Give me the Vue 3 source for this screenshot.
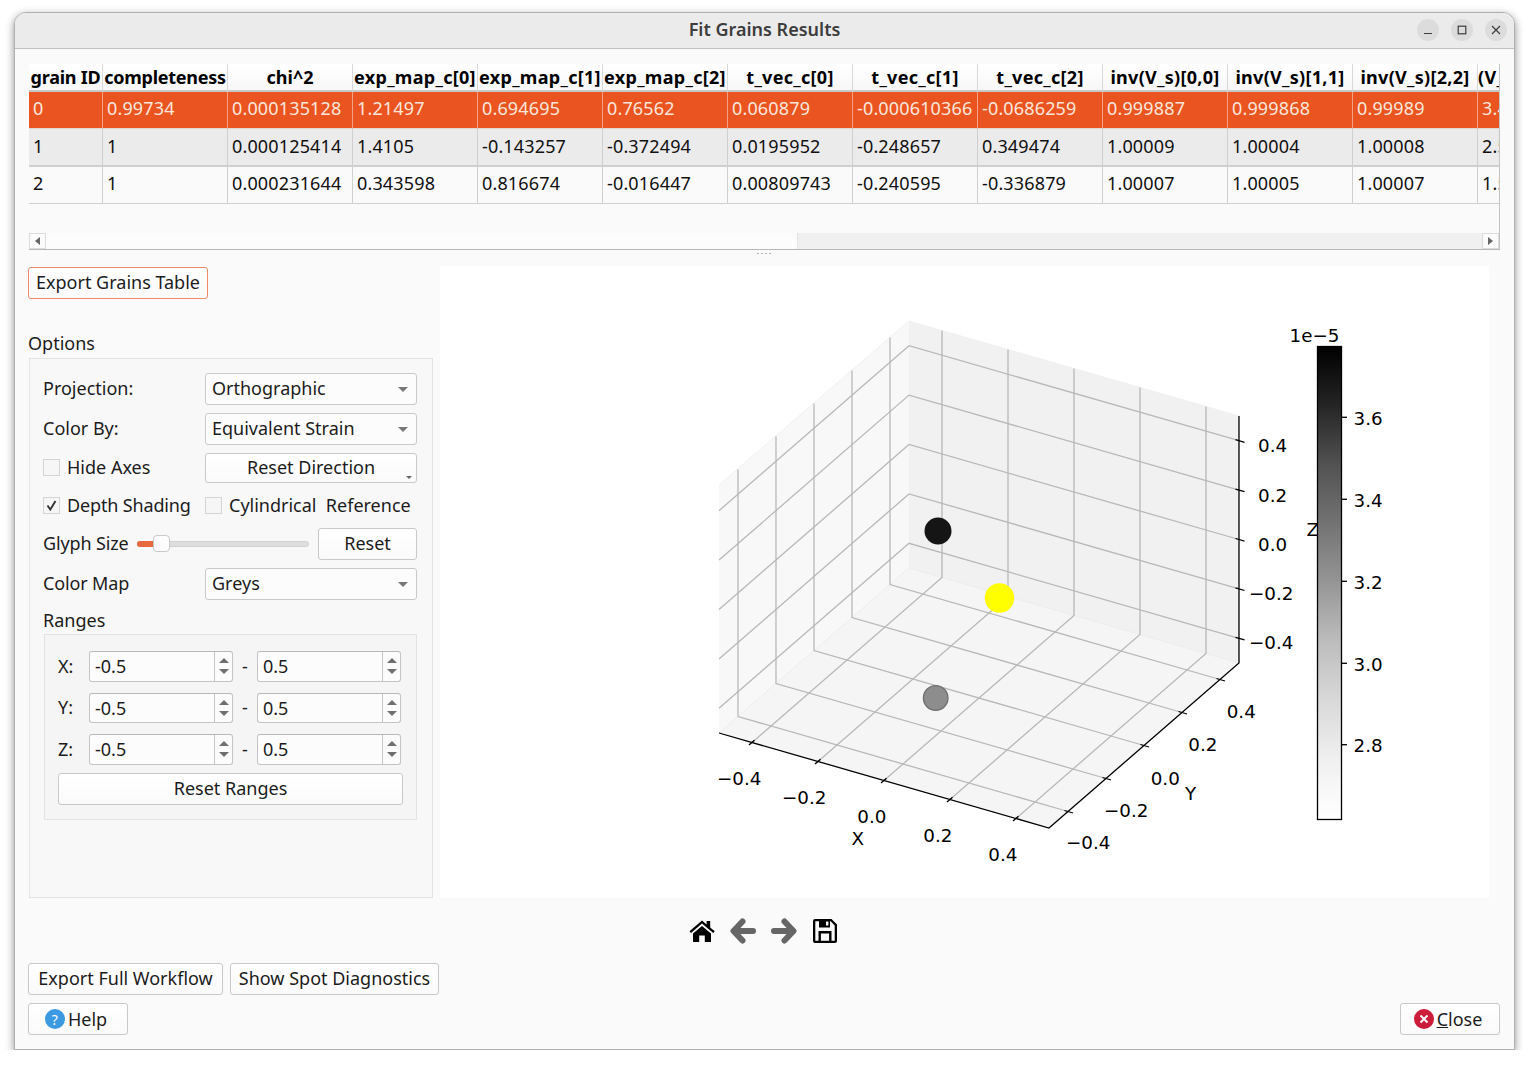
<script setup>
const headers = ['grain ID', 'completeness', 'chi^2', 'exp_map_c[0]', 'exp_map_c[1]', 'exp_map_c[2]', 't_vec_c[0]', 't_vec_c[1]', 't_vec_c[2]', 'inv(V_s)[0,0]', 'inv(V_s)[1,1]', 'inv(V_s)[2,2]', '(V_s)[1,2]']
const rows = [
  ['0', '0.99734', '0.000135128', '1.21497', '0.694695', '0.76562', '0.060879', '-0.000610366', '-0.0686259', '0.999887', '0.999868', '0.99989', '3.4'],
  ['1', '1', '0.000125414', '1.4105', '-0.143257', '-0.372494', '0.0195952', '-0.248657', '0.349474', '1.00009', '1.00004', '1.00008', '2.5'],
  ['2', '1', '0.000231644', '0.343598', '0.816674', '-0.016447', '0.00809743', '-0.240595', '-0.336879', '1.00007', '1.00005', '1.00007', '1.5']
]
const ranges = ['X:', 'Y:', 'Z:']

// axes box corners, in screen px
const ticks = [0.1, 0.3, 0.5, 0.7, 0.9]
const H = 247
const lines = []
for (const t of ticks) {
  // x gridlines: along the y axis on the floor then up the back wall
  const fx = 909 + 330 * t
  const fy = 568 + 95 * t
  lines.push(`${fx - 190},${fy + 165} ${fx},${fy} ${fx},${fy - H}`)
  // y gridlines: along the x axis on the floor then up the left wall
  const gx = 909 - 190 * t
  const gy = 568 + 165 * t
  lines.push(`${gx + 330},${gy + 95} ${gx},${gy} ${gx},${gy - H}`)
  // z gridlines round the two walls
  const zy = 568 - H * t
  lines.push(`719,${zy + 165} 909,${zy} 1239,${zy + 95}`)
}
const tickMarks = []
for (const t of ticks) {
  const x = 719 + 330 * t
  const y = 733 + 95 * t
  tickMarks.push([x - 3, y + 2.6, x + 2.5, y - 2.2])
  tickMarks.push([1049 + 190 * t - 3.5, 828 - 165 * t - 1, 1049 + 190 * t + 5, 828 - 165 * t + 1.5])
  tickMarks.push([1235.5, 663 - H * t - 1, 1244.5, 663 - H * t + 1.6])
}
const labels = [
  [1258, 452, '0.4'], [1258, 501.6, '0.2'], [1258, 551, '0.0'], [1249, 600, '−0.2'], [1249, 649.4, '−0.4'],
  [717, 785, '−0.4'], [782, 804, '−0.2'], [857.3, 823, '0.0'], [923.3, 842, '0.2'], [988.3, 861, '0.4'],
  [1226.7, 718, '0.4'], [1188.3, 751, '0.2'], [1150.7, 785, '0.0'], [1104, 817, '−0.2'], [1066, 849, '−0.4'],
  [851.5, 845, 'X'], [1185, 800, 'Y'], [1306.5, 536, 'Z']
]
const cbTicks = [[417.3, '3.6'], [499.3, '3.4'], [581.3, '3.2'], [663.3, '3.0'], [744.7, '2.8']]
</script>

<template>
  <div class="window">
    <div class="titlebar">
      <span class="title">Fit Grains Results</span>
      <div class="controls">
        <span class="ctl"><svg width="12" height="12" viewBox="0 0 12 12"><path d="M2 9.5h8" stroke="#3d3d3d" stroke-width="1.2" /></svg></span>
        <span class="ctl"><svg width="12" height="12" viewBox="0 0 12 12"><rect x="2.2" y="2.2" width="7.6" height="7.6" fill="none" stroke="#3d3d3d" stroke-width="1.2" /></svg></span>
        <span class="ctl"><svg width="12" height="12" viewBox="0 0 12 12"><path d="M2 2l8 8M10 2l-8 8" stroke="#3d3d3d" stroke-width="1.2" /></svg></span>
      </div>
    </div>

    <div class="content">
      <div class="table-frame">
        <div class="table-wrap">
          <table class="grains">
            <colgroup>
              <col style="width: 74px" />
              <col v-for="n in 12" :key="n" style="width: 125px" />
            </colgroup>
            <thead>
              <tr><th v-for="h in headers" :key="h">{{ h }}</th></tr>
            </thead>
            <tbody>
              <tr v-for="(row, i) in rows" :key="i" :class="'row' + i">
                <td v-for="(c, j) in row" :key="j">{{ c }}</td>
              </tr>
            </tbody>
          </table>
        </div>
        <div class="hscroll">
          <span class="sb-btn"><i class="tri-left"></i></span>
          <span class="sb-groove"></span>
          <span class="sb-thumb"></span>
          <span class="sb-btn right"><i class="tri-right"></i></span>
        </div>
      </div>
      <div class="splitter"><i></i><i></i><i></i><i></i></div>

      <div class="main">
        <div class="left">
          <button class="btn export">Export Grains Table</button>
          <div class="options-label">Options</div>
          <div class="group">
            <div class="row">
              <label class="lbl">Projection:</label>
              <div class="combo">Orthographic<i class="tri-down"></i></div>
            </div>
            <div class="row">
              <label class="lbl">Color By:</label>
              <div class="combo">Equivalent Strain<i class="tri-down"></i></div>
            </div>
            <div class="row short">
              <div class="lbl check-wrap"><span class="check"></span>Hide Axes</div>
              <button class="btn reset-dir">Reset Direction<i class="tri-mini"></i></button>
            </div>
            <div class="row short">
              <div class="lbl check-wrap depth">
                <span class="check"><svg width="15" height="15" viewBox="0 0 15 15"><path d="M3.5 7.5l2.8 4L11.5 3" fill="none" stroke="#333" stroke-width="1.9" /></svg></span><span class="tight">Depth Shading</span>
              </div>
              <div class="check-wrap cyl"><span class="check"></span><span>{{ 'Cylindrical  Reference' }}</span></div>
            </div>
            <div class="row">
              <label class="lbl glyph tight">Glyph Size</label>
              <div class="slider"><span class="fill"></span><span class="handle"></span></div>
              <button class="btn reset">Reset</button>
            </div>
            <div class="row">
              <label class="lbl tight">Color Map</label>
              <div class="combo">Greys<i class="tri-down"></i></div>
            </div>
            <div class="ranges-label">Ranges</div>
            <div class="ranges">
              <div v-for="r in ranges" :key="r" class="range-row">
                <label class="axis">{{ r }}</label>
                <div class="spin"><span class="val">-0.5</span><span class="steps"><i class="up"></i><i class="down"></i></span></div>
                <span class="dash">-</span>
                <div class="spin"><span class="val">0.5</span><span class="steps"><i class="up"></i><i class="down"></i></span></div>
              </div>
              <button class="btn reset-ranges">Reset Ranges</button>
            </div>
          </div>
        </div>

        <div class="plot">
          <svg width="1049" height="632" viewBox="440 266 1049 632" class="chart">
            <defs>
              <linearGradient id="greys" x1="0" y1="1" x2="0" y2="0">
                <stop offset="0" stop-color="#ffffff" />
                <stop offset="0.125" stop-color="#f0f0f0" />
                <stop offset="0.25" stop-color="#d9d9d9" />
                <stop offset="0.375" stop-color="#bdbdbd" />
                <stop offset="0.5" stop-color="#969696" />
                <stop offset="0.625" stop-color="#737373" />
                <stop offset="0.75" stop-color="#525252" />
                <stop offset="0.875" stop-color="#252525" />
                <stop offset="1" stop-color="#000000" />
              </linearGradient>
            </defs>
            <polygon points="719,485 909,321 909,568 719,733" fill="#f8f8f8" />
            <polygon points="909,321 1239,416 1239,663 909,568" fill="#f1f1f1" />
            <polygon points="909,568 1239,663 1049,828 719,733" fill="#f5f5f5" />
            <polyline points="719,485 909,321 1239,416" fill="none" stroke="#f0f0f0" stroke-width="1" />
            <polyline points="719,733 909,568 1239,663" fill="none" stroke="#ececec" stroke-width="1" />
            <polyline v-for="(l, i) in lines" :key="i" :points="l" fill="none" stroke="#b8b8b8" stroke-width="1.3" />
            <path d="M719 733L1049 828L1239 663V416" fill="none" stroke="#000" stroke-width="1.3" />
            <line v-for="(m, i) in tickMarks" :key="'t' + i" :x1="m[0]" :y1="m[1]" :x2="m[2]" :y2="m[3]" stroke="#000" stroke-width="1.3" />
            <circle cx="938" cy="531" r="13.5" fill="#151515" />
            <circle cx="999.5" cy="598" r="14.7" fill="#ffff00" />
            <circle cx="935.7" cy="698" r="12.3" fill="#8d8d8d" stroke="#6e6e6e" stroke-width="1.3" />
            <text v-for="(t, i) in labels" :key="'l' + i" :x="t[0]" :y="t[1]" class="plot-text">{{ t[2] }}</text>
            <rect x="1317.5" y="346.5" width="24" height="473" fill="url(#greys)" stroke="#000" stroke-width="1.3" />
            <g v-for="c in cbTicks" :key="c[1]">
              <line x1="1341.5" x2="1347" :y1="c[0]" :y2="c[0]" stroke="#000" stroke-width="1.3" />
              <text x="1353.5" :y="c[0] + 7.2" class="plot-text">{{ c[1] }}</text>
            </g>
            <text x="1289.5" y="342" class="plot-text">1e−5</text>
          </svg>
        </div>
      </div>

      <div class="toolbar">
        <span class="tool">
          <svg width="28" height="26" viewBox="0 0 28 26">
            <path d="M1.5 13.2L14 2.5l4.6 3.9V3h3.6v6.5l4.5 3.7-1.5 1.7L14 5.6 3 14.9z" fill="#000" />
            <path d="M5 15.6L14 8l9 7.6V24h-6.2v-6.6h-5.6V24H5z" fill="#000" />
          </svg>
        </span>
        <span class="tool">
          <svg width="28" height="26" viewBox="0 0 28 26"><path d="M24 13H5.5M13.5 3.5L4.5 13l9 9.5" fill="none" stroke="#666" stroke-width="6" stroke-linejoin="round" stroke-linecap="round" /></svg>
        </span>
        <span class="tool">
          <svg width="28" height="26" viewBox="0 0 28 26"><path d="M4 13h18.5M14.5 3.5l9 9.5-9 9.5" fill="none" stroke="#666" stroke-width="6" stroke-linejoin="round" stroke-linecap="round" /></svg>
        </span>
        <span class="tool">
          <svg width="28" height="26" viewBox="0 0 28 26">
            <path fill-rule="evenodd" d="M4 1h16.5L26 6.5V23a2 2 0 0 1-2 2H4a2 2 0 0 1-2-2V3a2 2 0 0 1 2-2zM4.3 3.3v19.4h19.4V7.5l-4-4.2H19v6.2H8V3.3zM15 3.6h2.4v4H15zM7.5 13h13v9.7h-2.4v-7.3H9.9v7.3H7.5z" fill="#000" />
          </svg>
        </span>
      </div>

      <div class="bottom-row">
        <button class="btn workflow">Export Full Workflow</button>
        <button class="btn spots">Show Spot Diagnostics</button>
      </div>
      <div class="bottom-row last">
        <button class="btn dlg">
          <span class="round help">?</span>Help
        </button>
        <button class="btn dlg">
          <span class="round close"><svg width="10" height="10" viewBox="0 0 10 10"><path d="M1.5 1.5l7 7M8.5 1.5l-7 7" stroke="#fff" stroke-width="2" /></svg></span><span><u>C</u>lose</span>
        </button>
      </div>
    </div>
  </div>
</template>

<style scoped>
.window {
  box-sizing: border-box;
  width: 1501px;
  height: 1038px;
  margin: 12px 0 0 14px;
  background: #fafafa;
  border: 1px solid #b0b0b0;
  border-radius: 12px 12px 0 0;
  box-shadow: 0 3px 9px rgba(0, 0, 0, 0.45);
  display: flex;
  flex-direction: column;
  font-family: "Noto Sans", sans-serif;
  font-size: 18px;
  color: #1c1c1c;
  overflow: hidden;
}

.titlebar {
  box-sizing: border-box;
  height: 36px;
  flex: none;
  background: #ebebeb;
  border-bottom: 1px solid #c0c0c0;
  display: flex;
  align-items: center;
  justify-content: center;
  position: relative;
}
.title {
  font-weight: 600;
  font-size: 18px;
  color: #3d3d3d;
  padding-bottom: 3px;
}
.controls {
  position: absolute;
  right: 7px;
  top: 6px;
  display: flex;
  gap: 12px;
}
.ctl {
  width: 22px;
  height: 22px;
  border-radius: 50%;
  background: #dcdcdc;
  display: flex;
  align-items: center;
  justify-content: center;
}

.content {
  flex: 1;
  padding: 15px 14px 0 13px;
  display: flex;
  flex-direction: column;
  min-height: 0;
}

.table-frame {
  height: 186px;
  flex: none;
  margin: 0 0 0 1px;
  width: 1471px;
  box-sizing: border-box;
  border-right: 1px solid #c4c4c4;
  border-bottom: 1px solid #b8b8b8;
  display: flex;
  flex-direction: column;
}
.table-wrap {
  flex: 1;
  overflow: hidden;
  min-height: 0;
}
.grains {
  table-layout: fixed;
  width: 1574px;
  border-collapse: separate;
  border-spacing: 0;
  color: #111;
}
.grains th {
  height: 26px;
  padding: 0;
  font-weight: 700;
  font-size: 18px;
  text-align: center;
  white-space: nowrap;
  overflow: hidden;
  background: linear-gradient(#ffffff, #f7f7f7);
  border-right: 1px solid #d8d8d8;
  border-bottom: 2px solid #c8c8c8;
  color: #000;
}
.grains th:nth-child(-n+2) {
  letter-spacing: -0.25px;
}
.grains th:nth-child(n+4) {
  letter-spacing: 0.3px;
}
.grains th:last-child {
  text-align: left;
}
.grains td {
  box-sizing: border-box;
  height: 37.4px;
  padding: 0 0 3px 4px;
  letter-spacing: 0.15px;
  white-space: nowrap;
  overflow: hidden;
  border-right: 1px solid #cfcfcf;
  border-bottom: 1px solid #cfcfcf;
}
.row0 td {
  background: #e95420;
  color: #fbe6dc;
  padding-bottom: 5px;
  border-right-color: #f1a184;
  border-bottom-color: #e0d6d0;
}
.row1 td {
  background: #ebebeb;
  border-bottom-width: 2px;
}
.row2 td {
  background: #fafafa;
}

.hscroll {
  height: 16px;
  flex: none;
  display: flex;
  background: #fcfcfc;
}
.sb-btn {
  width: 17px;
  flex: none;
  box-sizing: border-box;
  border: 1px solid #dcdcdc;
  background: #fbfbfb;
  display: flex;
  align-items: center;
  justify-content: center;
}
.sb-groove {
  width: 751px;
  flex: none;
}
.sb-thumb {
  flex: 1;
  background: #f0f0f0;
  border-left: 1px solid #e4e4e4;
}
.tri-left {
  border: 4px solid transparent;
  border-left: 0;
  border-right: 5px solid #666;
  height: 0;
}
.tri-right {
  border: 4px solid transparent;
  border-right: 0;
  border-left: 5px solid #666;
  height: 0;
}

.splitter {
  height: 16px;
  flex: none;
  display: flex;
  justify-content: center;
  gap: 2px;
  padding-top: 3px;
  box-sizing: border-box;
}
.splitter i {
  width: 2px;
  height: 1px;
  background: #b5b5b5;
}

.main {
  height: 632px;
  flex: none;
  display: flex;
}
.left {
  width: 405px;
  flex: none;
  display: flex;
  flex-direction: column;
  align-items: flex-start;
}
.btn {
  box-sizing: border-box;
  height: 32px;
  padding: 0 0 2px;
  font: inherit;
  color: #1c1c1c;
  background: linear-gradient(#ffffff, #fafafa);
  border: 1px solid #c9c9c9;
  border-radius: 3px;
  white-space: nowrap;
}
.export {
  width: 180px;
  margin-top: 1px;
  border-color: #ee8a68;
  flex: none;
}
.workflow {
  width: 195px;
}
.spots {
  width: 209px;
}
.options-label {
  margin-top: 31px;
  height: 26px;
  line-height: 26px;
  flex: none;
}
.group {
  margin: 2px 0 0 1px;
  box-sizing: border-box;
  width: 404px;
  height: 540px;
  flex: none;
  background: #f8f8f8;
  border: 1px solid #e3e3e3;
  padding: 14px 15px 0 13px;
  display: flex;
  flex-direction: column;
  gap: 8px;
}
.row {
  display: flex;
  align-items: center;
  height: 32px;
  flex: none;
}
.row.short {
  height: 30px;
}
.row.short + .row.short {
  margin-top: -1px;
}
.lbl {
  width: 162px;
  flex: none;
  padding-bottom: 2px;
}
.lbl.glyph {
  width: 94px;
}
.tight {
  letter-spacing: -0.15px;
}
.combo {
  box-sizing: border-box;
  width: 212px;
  height: 32px;
  line-height: 28px;
  padding-left: 6px;
  background: #fcfcfc;
  border: 1px solid #c9c9c9;
  border-radius: 3px;
  position: relative;
}
.tri-down {
  position: absolute;
  right: 8px;
  top: 13px;
  border: 5px solid transparent;
  border-bottom: 0;
  border-top: 5px solid #777;
}
.reset-dir {
  width: 212px;
  height: 30px;
  position: relative;
}
.tri-mini {
  position: absolute;
  right: 4px;
  bottom: 3px;
  border: 3px solid transparent;
  border-bottom: 0;
  border-top: 3px solid #666;
}
.check-wrap {
  display: flex;
  align-items: center;
  gap: 7px;
  white-space: pre;
}
.check-wrap.depth {
  padding-bottom: 0;
}
.check-wrap.cyl {
  gap: 7px;
}
.check {
  box-sizing: border-box;
  width: 17px;
  height: 17px;
  flex: none;
  background: #f6f6f6;
  border: 1px solid #d4d4d4;
  display: flex;
  align-items: center;
  justify-content: center;
}
.slider {
  width: 172px;
  height: 6px;
  flex: none;
  background: #dedede;
  border: 1px solid #d2d2d2;
  box-sizing: border-box;
  border-radius: 3px;
  position: relative;
}
.fill {
  position: absolute;
  left: -1px;
  top: -1px;
  width: 20px;
  height: 6px;
  background: #e7683e;
  border-radius: 3px 0 0 3px;
}
.handle {
  position: absolute;
  left: 15px;
  top: -7px;
  width: 17px;
  height: 17px;
  box-sizing: border-box;
  background: #fdfdfd;
  border: 1px solid #c9c9c9;
  border-radius: 4px;
}
.reset {
  width: 99px;
  margin-left: 9px;
}
.ranges-label {
  height: 18px;
  line-height: 25px;
  flex: none;
}
.ranges {
  box-sizing: border-box;
  margin-left: 1px;
  width: 373px;
  height: 186px;
  flex: none;
  background: #f5f5f5;
  border: 1px solid #e3e3e3;
  padding: 16px 0 0 13px;
  display: flex;
  flex-direction: column;
  gap: 11px;
}
.range-row {
  display: flex;
  align-items: center;
  height: 30.5px;
  flex: none;
}
.axis {
  width: 31px;
  flex: none;
  padding-bottom: 1px;
}
.dash {
  width: 24px;
  text-align: center;
  flex: none;
  padding-bottom: 1px;
}
.spin {
  box-sizing: border-box;
  width: 144px;
  height: 30.5px;
  flex: none;
  display: flex;
  background: #fcfcfc;
  border: 1px solid #c4c4c4;
  border-top-color: #b8b8b8;
  border-radius: 3px;
}
.val {
  flex: 1;
  padding-left: 5px;
  line-height: 28px;
}
.steps {
  width: 18px;
  box-sizing: border-box;
  border-left: 1px solid #c4c4c4;
  display: flex;
  flex-direction: column;
  align-items: center;
  justify-content: center;
  gap: 6px;
}
.up {
  border: 5px solid transparent;
  border-top: 0;
  border-bottom: 5px solid #707070;
}
.down {
  border: 5px solid transparent;
  border-bottom: 0;
  border-top: 5px solid #707070;
}
.reset-ranges {
  width: 345px;
  margin-top: -2.5px;
  flex: none;
}

.plot {
  width: 1049px;
  height: 632px;
  flex: none;
  margin-left: 7px;
  background: #ffffff;
}
.chart {
  display: block;
}
.plot-text {
  font-family: "DejaVu Sans", sans-serif;
  font-size: 18.3px;
  fill: #000;
}

.toolbar {
  height: 65px;
  flex: none;
  display: flex;
  justify-content: center;
  padding-top: 20px;
  box-sizing: border-box;
  margin-left: -2px;
}
.tool {
  width: 41px;
  height: 26px;
  display: flex;
  justify-content: center;
}

.bottom-row {
  display: flex;
  gap: 7px;
  flex: none;
  margin-bottom: 8px;
}
.bottom-row.last {
  justify-content: space-between;
  margin-bottom: 0;
}
.dlg {
  width: 100px;
  display: flex;
  align-items: center;
  justify-content: center;
  gap: 3px;
  padding: 0 4px 0 0;
}
.round {
  width: 20px;
  height: 20px;
  border-radius: 50%;
  display: flex;
  align-items: center;
  justify-content: center;
  font-size: 14px;
  color: #fff;
}
.help {
  background: #3b9ae1;
}
.close {
  background: #cd1d3c;
}
</style>

<style>
html, body {
  background: #ffffff;
}
</style>
